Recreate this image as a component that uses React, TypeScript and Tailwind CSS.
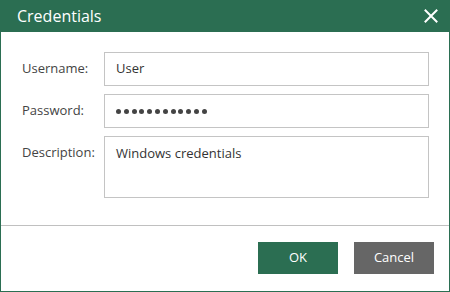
export default function App() {
  const font = { fontFamily: '"Open Sans", "Noto Sans", sans-serif' };
  const dots = Array.from({ length: 12 });
  return (
    <div className="w-[450px] h-[292px] bg-white border border-[#2b6e52] flex flex-col text-[#444]" style={font}>
      {/* title bar */}
      <div className="h-[32px] -mx-px -mt-px bg-[#2b6e52] flex items-center justify-between pl-[17px] pr-[13px] shrink-0">
        <span className="text-white text-[16px] leading-none">Credentials</span>
        <svg width="14" height="14" viewBox="0 0 14 14" className="mr-[-1px]">
          <path d="M1.5 1.5 L12.5 12.5 M12.5 1.5 L1.5 12.5" stroke="#fff" strokeWidth="2" strokeLinecap="square" />
        </svg>
      </div>

      {/* form */}
      <div className="flex-1 pt-[20px] pl-[21px] pr-[20px] flex flex-col gap-[8px] text-[13px]">
        <div className="flex items-center">
          <label className="w-[82px]">Username:</label>
          <div className="flex-1 h-[34px] border border-[#c4c4c4] flex items-center px-[11px] text-[#333]">User</div>
        </div>
        <div className="flex items-center">
          <label className="w-[82px]">Password:</label>
          <div className="flex-1 h-[34px] border border-[#c4c4c4] flex items-center gap-[2.8px] px-[11px]">
            {dots.map((_, i) => (
              <span key={i} className="w-[5px] h-[5px] rounded-full bg-[#444]" />
            ))}
          </div>
        </div>
        <div className="flex items-start">
          <label className="w-[82px] pt-[7px]">Description:</label>
          <div className="flex-1 h-[62px] border border-[#c4c4c4] px-[11px] pt-[7px] text-[#333]">Windows credentials</div>
        </div>
      </div>

      {/* footer */}
      <div className="h-[66px] border-t border-[#c0c0c0] flex items-center justify-end gap-[16px] pr-[15px] pb-[2px] shrink-0">
        <button className="w-[80px] h-[32px] bg-[#2b6e52] text-white text-[13px]">OK</button>
        <button className="w-[80px] h-[32px] bg-[#666] text-white text-[13px]">Cancel</button>
      </div>
    </div>
  );
}
